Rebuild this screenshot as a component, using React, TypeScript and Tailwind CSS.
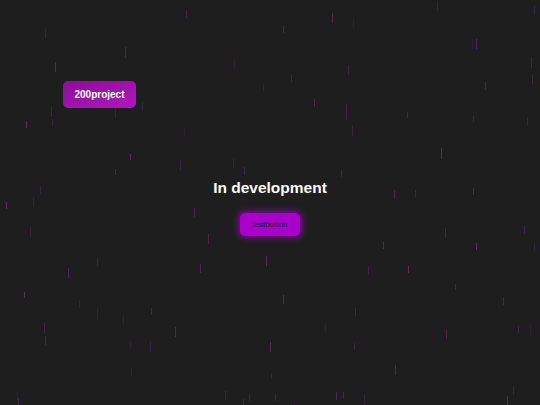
import React from "react";

// small seeded random so the rain looks the same every render
const makeRand = (seed: number) => {
  let s = seed;
  return () => {
    s = (s * 16807) % 2147483647;
    return (s - 1) / 2147483646;
  };
};

const dropColors = ["#6a2a7a", "#7e2f6e", "#55286e", "#853682", "#5e2c80"];

const drops = (() => {
  const rand = makeRand(4242);
  const list: { x: number; y: number; h: number; c: string; o: number }[] = [];
  for (let i = 0; i < 95; i++) {
    list.push({
      x: Math.round(rand() * 540),
      y: Math.round(rand() * 405),
      h: 6 + Math.round(rand() * 5),
      c: dropColors[Math.floor(rand() * dropColors.length)],
      o: 0.3 + rand() * 0.4,
    });
  }
  return list;
})();

const Rain: React.FC = () => (
  <div className="pointer-events-none absolute inset-0 overflow-hidden">
    {drops.map((d, i) => (
      <span
        key={i}
        className="absolute w-px"
        style={{ left: d.x, top: d.y, height: d.h, background: d.c, opacity: d.o }}
      />
    ))}
  </div>
);

const App: React.FC = () => {
  return (
    <div
      className="relative h-[405px] w-full overflow-hidden bg-[#1e1e1e] text-white"
      style={{ fontFamily: '"Liberation Sans", Arial, sans-serif' }}
    >
      <Rain />
      <div className="relative flex flex-col">
        <header className="pl-[63px] pt-[81px]">
          <button className="flex h-[27px] w-[73px] items-center justify-center rounded-[5px] bg-gradient-to-br from-[#8a1094] to-[#b414c4] text-[10px] font-bold text-white">
            200project
          </button>
        </header>
        <main className="mt-[71px] flex flex-col items-center">
          <h1 className="text-[15.5px] leading-[18px] font-bold text-white">
            In development
          </h1>
          <button className="mt-[16px] flex h-[23px] w-[60px] items-center justify-center rounded-[5px] bg-[#a900c9] text-[8px] text-[#240628] shadow-[0_0_6px_2px_rgba(170,0,210,0.7)]">
            testbutton
          </button>
        </main>
      </div>
    </div>
  );
};

export default App;
